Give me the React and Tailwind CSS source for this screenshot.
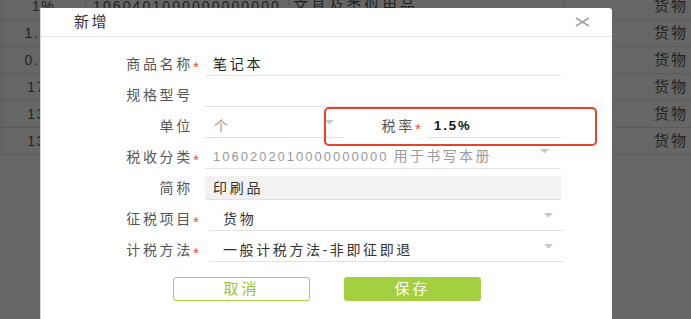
import React from 'react';

const rows = [
  { rate: '1%', code: '1060401000000000000', name: '文具及类似用品' },
  { rate: '1.5%', code: '1060202010000000000', name: '书写本册' },
  { rate: '0.5%', code: '1060401000000000000', name: '文具及类似用品' },
  { rate: '17%', code: '1060202010000000000', name: '书写本册' },
  { rate: '13%', code: '1060401000000000000', name: '文具及类似用品' },
  { rate: '13%', code: '1060202010000000000', name: '书写本册' },
];

function Caret({ className = '' }) {
  return (
    <svg width="9" height="5" viewBox="0 0 9 5" className={className}>
      <path d="M0 0h9L4.5 4.5z" fill="#c6c6c6" />
    </svg>
  );
}

function Label({ children, required, className = 'w-[152px]' }) {
  return (
    <div className={`${className} shrink-0 h-full flex items-end justify-end pb-[3px]`}>
      <span className="relative leading-[18px] text-[14px] tracking-[2.7px] text-[#555]">
        {children}
        {required && (
          <span className="absolute left-full top-[3px] text-[15px] leading-[18px] tracking-normal text-[#ee4a36]">*</span>
        )}
      </span>
    </div>
  );
}

export default function App() {
  return (
    <div className="relative h-[319px] w-[691px] overflow-hidden bg-[#666] font-['Liberation_Sans','Noto_Sans_CJK_SC',sans-serif]">
      {/* table behind the dimmed overlay */}
      <div className="mt-[-7px] ml-[1px] border-l border-[#5a5a5a]">
        {rows.map((r, i) => (
          <div key={i} className="flex h-[27px] border-b border-[#5a5a5a] text-[14px] text-[#222]">
            <div className="w-[84px] shrink-0 border-r border-[#5a5a5a] flex items-center justify-center tracking-[1.5px]">{r.rate}</div>
            <div className="w-[203px] shrink-0 border-r border-[#5a5a5a] flex items-center justify-center tracking-[2.1px]">{r.code}</div>
            <div className="w-[275px] shrink-0 border-r border-[#5a5a5a] flex items-center pl-[4px] text-[15px] tracking-[2.8px]">{r.name}</div>
            <div className="flex-1 flex items-center pl-[90px] text-[15px] tracking-[2px]">货物</div>
          </div>
        ))}
      </div>

      {/* modal */}
      <div className="absolute left-[40px] top-[8px] w-[572px] h-[330px] bg-white border-l border-[#d8d8d8] rounded-tr-[3px]">
        {/* header */}
        <div className="h-[29px] flex items-center justify-between border-b border-[#e3e3e3] pl-[33px] pr-[22px]">
          <span className="text-[15px] tracking-[2.5px] text-[#333]">新增</span>
          <svg width="15" height="10" viewBox="0 0 15 10">
            <path d="M1 1l13 8M14 1L1 9" stroke="#a3a3a3" strokeWidth="1.7" />
          </svg>
        </div>

        {/* form */}
        <div className="pt-[8px]">
          {/* 商品名称 */}
          <div className="flex h-[31px]">
            <Label required>商品名称</Label>
            <div className="ml-[12px] w-[356px] h-full border-b border-[#e2e2e2] flex items-end pl-[8px] pb-[2px]">
              <span className="leading-[18px] text-[14px] tracking-[2.7px] text-[#222]">笔记本</span>
            </div>
          </div>

          {/* 规格型号 */}
          <div className="flex h-[31px]">
            <Label>规格型号</Label>
            <div className="ml-[12px] w-[356px] h-full border-b border-[#e2e2e2]" />
          </div>

          {/* 单位 / 税率 */}
          <div className="flex h-[31px]">
            <Label>单位</Label>
            <div className="ml-[12px] w-[139px] h-full border-b border-[#e2e2e2] flex items-end justify-between pl-[9px] pr-[10px] pb-[2px]">
              <span className="leading-[18px] text-[14px] text-[#999]">个</span>
              <Caret className="mb-[10px]" />
            </div>
            <Label required className="w-[71px]">税率</Label>
            <div className="ml-[11px] w-[135px] h-full border-b border-[#e2e2e2] flex items-end pl-[8px] pb-[2px]">
              <span className="leading-[18px] text-[13px] font-bold tracking-[2px] text-[#111]">1.5%</span>
            </div>
          </div>

          {/* 税收分类 */}
          <div className="flex h-[31px]">
            <Label required>税收分类</Label>
            <div className="ml-[12px] w-[356px] h-full border-b border-[#e2e2e2] flex items-end justify-between pl-[8px] pr-[12px] pb-[2px]">
              <span className="leading-[18px] text-[13px] text-[#9a9a9a] whitespace-nowrap">
                <span className="tracking-[2px]">1060202010000000000</span>
                <span className="tracking-[1.5px]"> </span>
                <span className="text-[14px] tracking-[2.4px]">用于书写本册</span>
              </span>
              <Caret className="mb-[12px]" />
            </div>
          </div>

          {/* 简称 */}
          <div className="flex h-[31px]">
            <Label>简称</Label>
            <div className="ml-[12px] w-[356px] h-[24px] self-end bg-[#f2f2f2] border-b border-[#e2e2e2] flex items-end pl-[8px] pb-[2px]">
              <span className="leading-[18px] text-[14px] tracking-[2.7px] text-[#333]">印刷品</span>
            </div>
          </div>

          {/* 征税项目 */}
          <div className="flex h-[31px]">
            <Label required>征税项目</Label>
            <div className="ml-[16px] w-[354px] h-full border-b border-[#e2e2e2] flex items-end justify-between pl-[14px] pr-[10px] pb-[2px]">
              <span className="leading-[18px] text-[14px] tracking-[2.7px] text-[#333]">货物</span>
              <Caret className="mb-[10px]" />
            </div>
          </div>

          {/* 计税方法 */}
          <div className="flex h-[31px]">
            <Label required>计税方法</Label>
            <div className="ml-[16px] w-[354px] h-full border-b border-[#e2e2e2] flex items-end justify-between pl-[14px] pr-[10px] pb-[2px]">
              <span className="leading-[18px] text-[14px] tracking-[2.6px] text-[#333]">一般计税方法-非即征即退</span>
              <Caret className="mb-[10px]" />
            </div>
          </div>

          {/* buttons */}
          <div className="flex gap-[34px] pl-[132px] mt-[15px]">
            <button className="w-[137px] h-[24px] rounded-[3px] border border-[#a6d147] text-[15px] tracking-[3px] text-[#94c53a] bg-white">取消</button>
            <button className="w-[137px] h-[24px] rounded-[3px] bg-[#a3cf40] text-[15px] tracking-[3px] text-white">保存</button>
          </div>
        </div>

        {/* red annotation around 税率 */}
        <div className="absolute left-[283px] top-[99px] w-[273px] h-[39px] border-2 border-[#e8412c] rounded-[5px]" />
      </div>
    </div>
  );
}
